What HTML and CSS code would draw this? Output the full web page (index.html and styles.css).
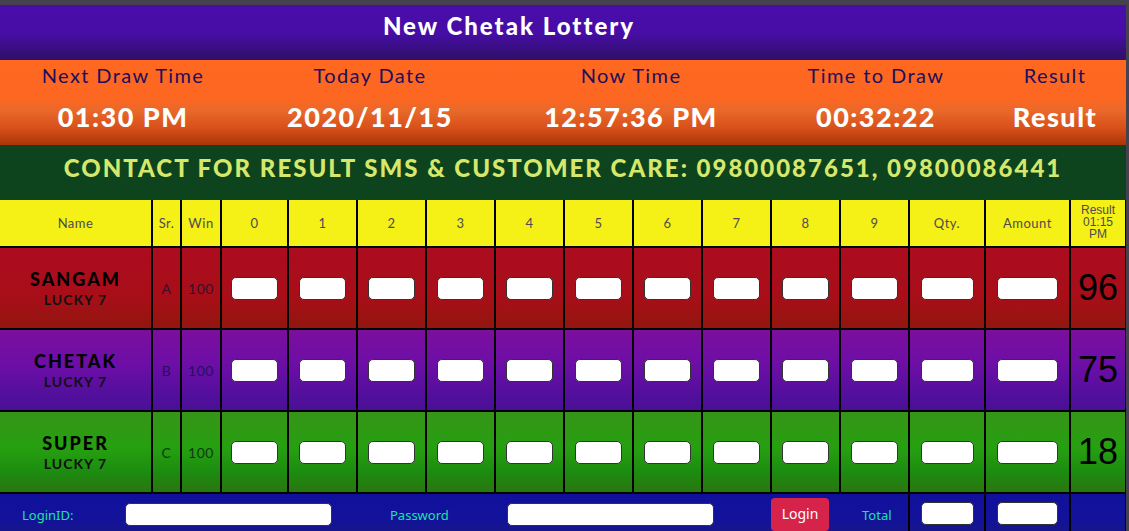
FILE: index.html
```html
<!DOCTYPE html>
<html>
<head>
<meta charset="utf-8">
<title>New Chetak Lottery</title>
<link rel="stylesheet" href="styles.css">
</head>
<body>
<div class="page">
  <div class="title">New Chetak Lottery</div>

  <div class="clock">
    <div class="clock-col"><span class="clock-label">Next Draw Time</span><span class="clock-value">01:30 PM</span></div>
    <div class="clock-col"><span class="clock-label">Today Date</span><span class="clock-value">2020/11/15</span></div>
    <div class="clock-col"><span class="clock-label">Now Time</span><span class="clock-value">12:57:36 PM</span></div>
    <div class="clock-col"><span class="clock-label">Time to Draw</span><span class="clock-value">00:32:22</span></div>
    <div class="clock-col"><span class="clock-label">Result</span><span class="clock-value">Result</span></div>
  </div>

  <div class="contact">CONTACT FOR RESULT SMS &amp; CUSTOMER CARE: 09800087651, 09800086441</div>

  <table class="board">
    <colgroup>
      <col class="c-name"><col class="c-sr"><col class="c-win">
      <col class="c-d0"><col class="c-d"><col class="c-d"><col class="c-d"><col class="c-d">
      <col class="c-d"><col class="c-d"><col class="c-d"><col class="c-d"><col class="c-d">
      <col class="c-qty"><col class="c-amt"><col class="c-res">
    </colgroup>
    <tr class="head">
      <th class="first">Name</th><th>Sr.</th><th>Win</th>
      <th>0</th><th>1</th><th>2</th><th>3</th><th>4</th><th>5</th><th>6</th><th>7</th><th>8</th><th>9</th>
      <th>Qty.</th><th>Amount</th><th class="res-head">Result<br>01:15<br>PM</th>
    </tr>
    <tr class="game red">
      <td class="first"><b class="game-name">SANGAM</b><span class="game-sub">LUCKY 7</span></td>
      <td class="sr">A</td><td class="win">100</td>
      <td><input class="box"></td><td><input class="box"></td><td><input class="box"></td><td><input class="box"></td><td><input class="box"></td>
      <td><input class="box"></td><td><input class="box"></td><td><input class="box"></td><td><input class="box"></td><td><input class="box"></td>
      <td><input class="box qty"></td><td><input class="box amt"></td><td class="result">96</td>
    </tr>
    <tr class="game purple">
      <td class="first"><b class="game-name">CHETAK</b><span class="game-sub">LUCKY 7</span></td>
      <td class="sr">B</td><td class="win">100</td>
      <td><input class="box"></td><td><input class="box"></td><td><input class="box"></td><td><input class="box"></td><td><input class="box"></td>
      <td><input class="box"></td><td><input class="box"></td><td><input class="box"></td><td><input class="box"></td><td><input class="box"></td>
      <td><input class="box qty"></td><td><input class="box amt"></td><td class="result">75</td>
    </tr>
    <tr class="game green">
      <td class="first"><b class="game-name">SUPER</b><span class="game-sub">LUCKY 7</span></td>
      <td class="sr">C</td><td class="win">100</td>
      <td><input class="box"></td><td><input class="box"></td><td><input class="box"></td><td><input class="box"></td><td><input class="box"></td>
      <td><input class="box"></td><td><input class="box"></td><td><input class="box"></td><td><input class="box"></td><td><input class="box"></td>
      <td><input class="box qty"></td><td><input class="box amt"></td><td class="result">18</td>
    </tr>
    <tr class="foot">
      <td class="first login" colspan="13">
        <div class="login-row">
          <label class="lbl lbl-id">LoginID:</label>
          <input class="box long">
          <label class="lbl lbl-pw">Password</label>
          <input class="box long" type="password">
          <button class="btn-login">Login</button>
          <span class="lbl lbl-total">Total</span>
        </div>
      </td>
      <td class="cell-in"><input class="box qty"></td><td class="cell-in"><input class="box amt"></td><td></td>
    </tr>
  </table>
</div>
</body>
</html>
```

FILE: styles.css
```css
body
{
	margin:0;
	background:#46414f;
	font-family:"Lato","Noto Sans",sans-serif;
}
.page
{
	width:1126px;
	padding-top:5px;
	overflow:hidden;
	height:526px;
}
.title
{
	height:55px;
	line-height:41px;
	padding-right:108px;
	text-align:center;
	color:#fff;
	font-size:24px;
	font-weight:900;
	letter-spacing:2px;
	background:linear-gradient(#4a0dab 0%,#470da6 50%,#2e1068 100%);
}
.clock
{
	height:85px;
	display:grid;
	grid-template-columns:246px 248px 274px 216px 142px;
	background:linear-gradient(#ff6820 0%,#fd6722 45%,#e8682a 60%,#d8501a 80%,#a83608 100%);
}
.clock-col
{
	display:flex;
	flex-direction:column;
	align-items:center;
}
.clock-label
{
	margin-top:3px;
	font-size:20px;
	letter-spacing:1.4px;
	color:#1c0f5c;
	line-height:24px;
}
.clock-value
{
	margin-top:14px;
	font-size:27px;
	font-weight:900;
	letter-spacing:1.5px;
	color:#fff;
	line-height:32px;
}
.contact
{
	height:55px;
	line-height:45px;
	background:#0d441e;
	color:#d6e86c;
	text-align:center;
	font-size:24px;
	font-weight:900;
	letter-spacing:2px;
}
.board
{
	width:1126px;
	border-collapse:collapse;
	table-layout:fixed;
}
.c-name{width:152px;}
.c-sr{width:29px;}
.c-win{width:40px;}
.c-d0{width:67px;}
.c-d{width:69px;}
.c-qty{width:76px;}
.c-amt{width:85px;}
.c-res{width:56px;}

.board th,.board td
{
	border:2px solid #000;
	padding:0;
	text-align:center;
}
.board .first
{
	border-left:none;
}
.board tr:first-child th
{
	border-top:none;
}
.head th
{
	height:44px;
	background:#f5f015;
	color:#4e4a52;
	font-size:13px;
	font-weight:normal;
	letter-spacing:0.5px;
}
.head .res-head
{
	font-family:"Liberation Sans",Arial,sans-serif;
	font-size:12px;
	line-height:12px;
	letter-spacing:0;
	padding-bottom:2px;
}
.game td
{
	height:80px;
}
.red
{
	background:linear-gradient(#ad0c1f 0%,#a80e18 60%,#92160f 100%);
}
.purple
{
	background:linear-gradient(#7c0f9e 0%,#6c0ea6 45%,#520f9c 80%,#4a1096 100%);
}
.green
{
	background:linear-gradient(#369418 0%,#26a010 45%,#1c8c10 75%,#2c7410 100%);
}
.game-name
{
	display:block;
	font-size:18px;
	font-weight:900;
	letter-spacing:2px;
	color:#000;
	line-height:22px;
	margin-top:2px;
}
.game-sub
{
	display:block;
	font-size:14px;
	font-weight:bold;
	letter-spacing:1px;
	color:#111;
	line-height:20px;
}
.sr,.win
{
	font-size:14px;
	letter-spacing:0.5px;
	color:#3a0f2a;
}
.purple .sr,.purple .win
{
	color:#2a0e5c;
}
.green .sr,.green .win
{
	color:#0f3a0f;
}
.result
{
	font-family:"Liberation Sans",Arial,sans-serif;
	font-size:36px;
	color:#000;
	padding-top:2px;
}
.box
{
	box-sizing:border-box;
	width:47px;
	height:23px;
	border:1px solid #333;
	border-radius:5px;
	background:#fff;
	padding:0;
	display:block;
	margin:0 auto;
}
.box.qty{width:53px;}
.box.amt{width:61px;}
.box.long{width:207px;margin:0;}

.foot td
{
	height:42px;
	border-bottom:none;
	background:linear-gradient(#10109c 0%,#12129a 50%,#1c1a80 100%);
	vertical-align:top;
}
.foot .login
{
	text-align:left;
	padding-top:4px;
}
.foot .cell-in
{
	padding-top:8px;
}
.login-row
{
	display:flex;
	align-items:center;
	padding-left:22px;
}
.lbl
{
	font-family:"Noto Sans",sans-serif;
	font-size:13px;
	color:#1de3a4;
}
.lbl-id{width:103px;}
.lbl-pw{width:117px;margin-left:58px;}
.btn-login
{
	margin-left:57px;
	width:58px;
	height:33px;
	padding:0 0 3px;
	border:none;
	border-radius:4px;
	background:#d6234a;
	color:#fff;
	font-family:"Noto Sans",sans-serif;
	font-size:14px;
}
.lbl-total{margin-left:33px;}
```
